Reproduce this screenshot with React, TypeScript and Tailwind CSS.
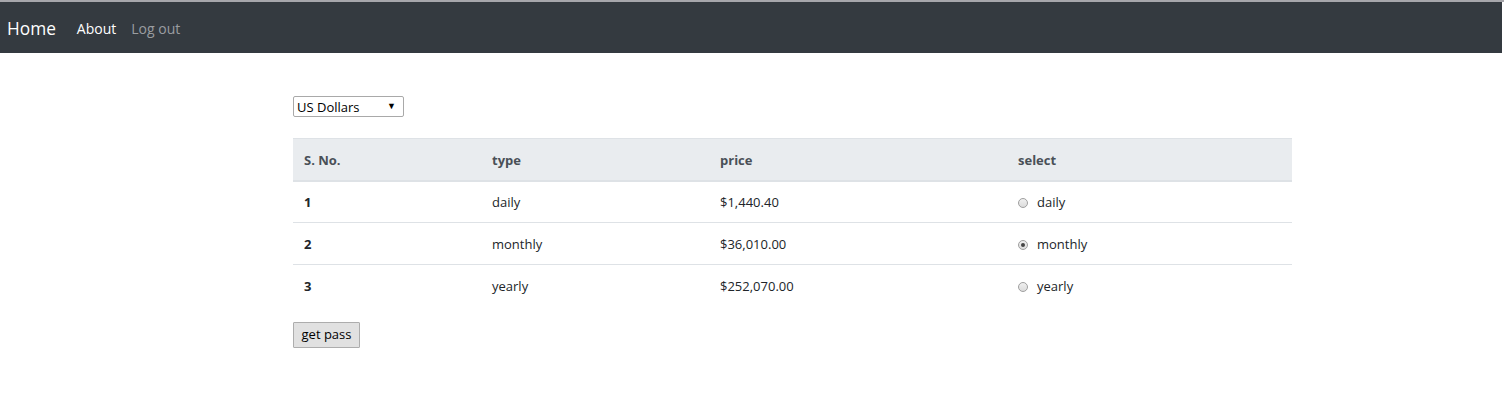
import React, { useState } from "react";

const rows = [
  { n: "1", type: "daily", price: "$1,440.40" },
  { n: "2", type: "monthly", price: "$36,010.00" },
  { n: "3", type: "yearly", price: "$252,070.00" },
];

export default function App() {
  const [sel, setSel] = useState("monthly");
  return (
    <div className="w-[1504px] h-[413px] bg-white" style={{ fontFamily: '"Open Sans", "Noto Sans", sans-serif' }}>
      <div className="h-[2px] bg-[#a6a6ab] w-full" />
      <nav className="h-[51px] w-[1502px] bg-[#343a40] flex items-center pt-[2px]">
        <span className="ml-[7px] text-[17.3px] text-white leading-none">Home</span>
        <span className="ml-[21px] text-[14px] text-white leading-none">About</span>
        <span className="ml-[15px] text-[14px] text-[#9a9da0] leading-none">Log out</span>
      </nav>
      <div className="pl-[293px] pt-[43px]">
        <div className="relative w-[111px] h-[21px] border border-[#a9a9a9] rounded-[2px] flex items-center text-[13px] text-black pl-[3px] pt-[2px]">
          US Dollars
          <span className="absolute right-[7px] top-[2px] text-[9px]">▼</span>
        </div>
        <table className="mt-[21px] w-[999px] text-[13px] text-[#212529] border-collapse">
          <thead>
            <tr className="bg-[#e9ecef] border-t border-[#dee2e6] border-b-2 border-b-[#dee2e6]">
              <th className="w-[188px] text-left font-bold text-[#495057] pl-[11px] h-[42px] pt-[2px]">S. No.</th>
              <th className="w-[228px] text-left font-bold text-[#495057] pl-[11px] pt-[2px]">type</th>
              <th className="w-[298px] text-left font-bold text-[#495057] pl-[11px] pt-[2px]">price</th>
              <th className="text-left font-bold text-[#495057] pl-[11px] pt-[2px]">select</th>
            </tr>
          </thead>
          <tbody>
            {rows.map((r, i) => (
              <tr key={r.n} className={i > 0 ? "border-t border-[#dee2e6]" : ""}>
                <td className="pl-[11px] h-[42px] font-bold pt-[2px]">{r.n}</td>
                <td className="pl-[11px] pt-[2px]">{r.type}</td>
                <td className="pl-[11px] pt-[2px]">{r.price}</td>
                <td className="pl-[11px] pt-[2px]">
                  <label className="flex items-center">
                    <span
                      className="w-[10px] h-[10px] rounded-full border border-[#a0a0a0] bg-gradient-to-b from-[#f0f0f0] to-[#dcdcdc] flex items-center justify-center"
                      onClick={() => setSel(r.type)}
                    >
                      {sel === r.type && <span className="w-[4px] h-[4px] rounded-full bg-[#444]" />}
                    </span>
                    <span className="ml-[9px]">{r.type}</span>
                  </label>
                </td>
              </tr>
            ))}
          </tbody>
        </table>
        <button className="mt-[15px] w-[67px] h-[26px] border border-[#adadad] bg-[#e1e1e1] text-[13px] text-black rounded-[1px]">
          get pass
        </button>
      </div>
    </div>
  );
}
